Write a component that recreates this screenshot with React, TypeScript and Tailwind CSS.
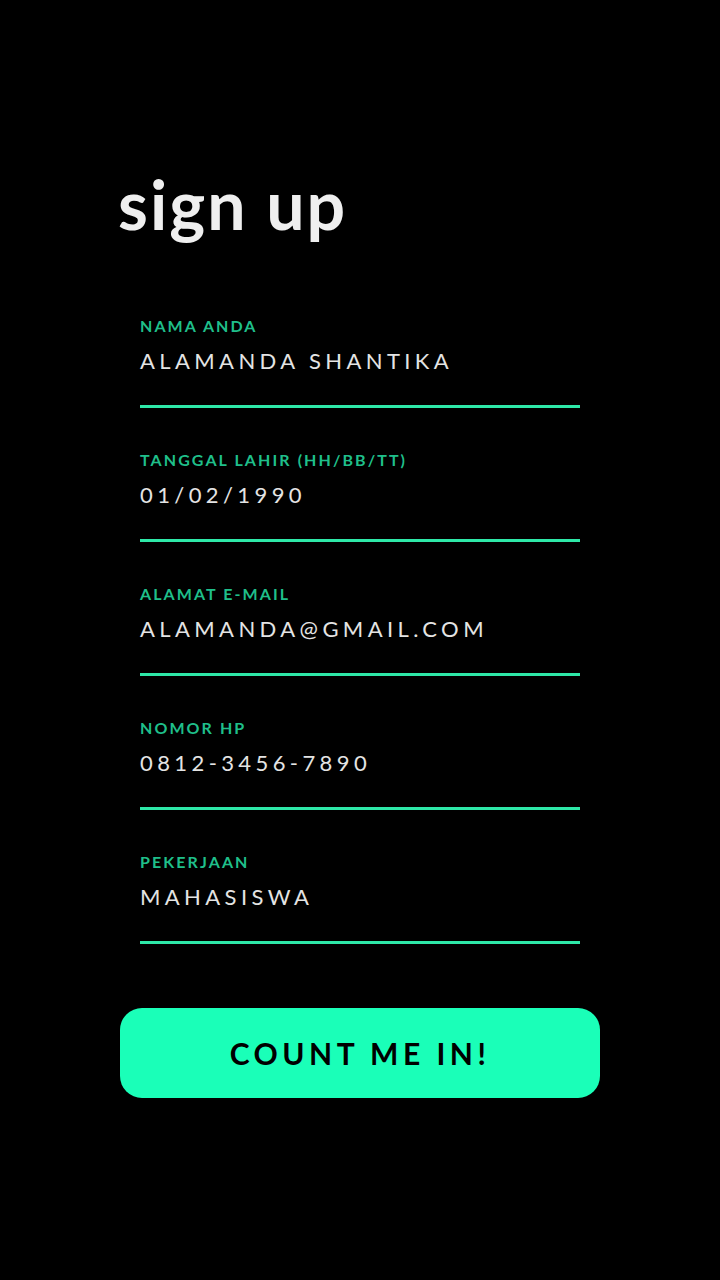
import React from "react";

const fields = [
  { label: "NAMA ANDA", value: "ALAMANDA SHANTIKA" },
  { label: "TANGGAL LAHIR (HH/BB/TT)", value: "01/02/1990" },
  { label: "ALAMAT E-MAIL", value: "ALAMANDA@GMAIL.COM" },
  { label: "NOMOR HP", value: "0812-3456-7890" },
  { label: "PEKERJAAN", value: "MAHASISWA" },
];

const Field = ({ label, value }: { label: string; value: string }) => (
  <div className="flex flex-col h-[134px]">
    <div className="text-[16px] leading-[18px] font-bold tracking-[0.13em] text-[#1fbf8a]">{label}</div>
    <div className="mt-[12px] text-[22px] leading-[28px] tracking-[0.2em] text-[#e4e4e4]">{value}</div>
    <div className="mt-[30px] h-[3px] w-full bg-[#2ee8a8]" />
  </div>
);

export default function App() {
  return (
    <div className="w-[720px] h-[1280px] bg-black font-['Lato','Liberation_Sans',sans-serif]">
      <div className="pt-[164px] pl-[118px]">
        <h1 className="text-[68px] leading-[80px] font-bold tracking-[0.03em] text-[#efefef]">sign up</h1>
      </div>
      <div className="mt-[73px] mx-[140px] flex flex-col">
        {fields.map((f) => (
          <Field key={f.label} label={f.label} value={f.value} />
        ))}
      </div>
      <div className="px-[120px] mt-[21px]">
        <button className="w-full h-[90px] rounded-[22px] bg-[#1affb8] text-black text-[30px] font-bold tracking-[0.15em]">
          COUNT ME IN!
        </button>
      </div>
    </div>
  );
}
